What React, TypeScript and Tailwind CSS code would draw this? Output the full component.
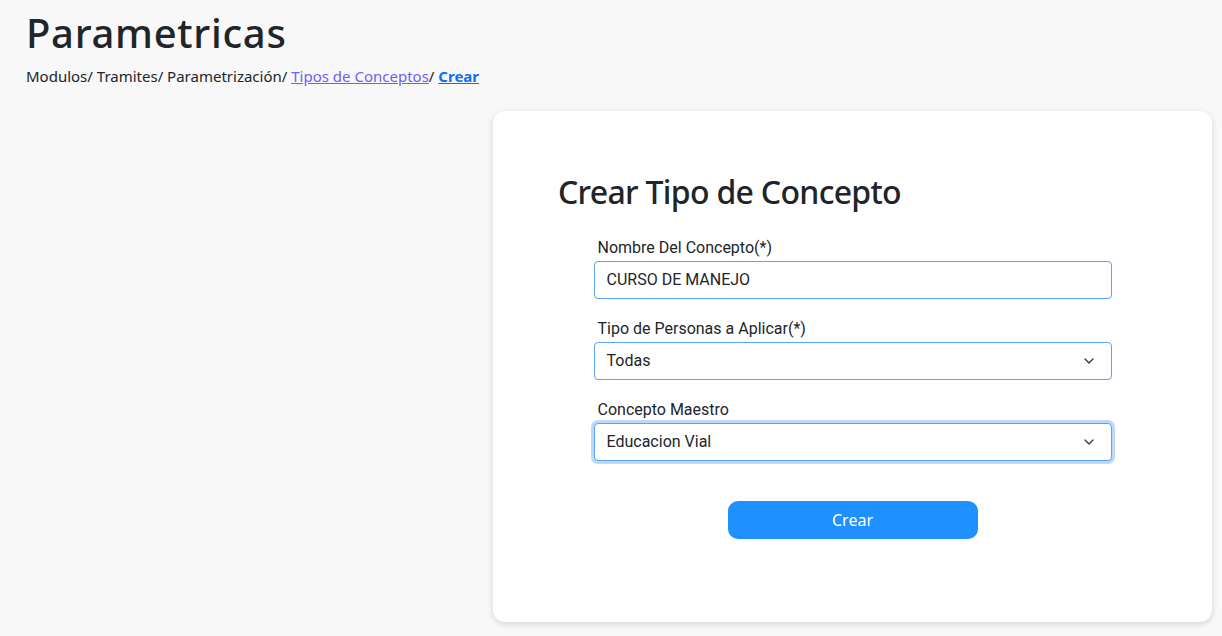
import { ChevronDown } from 'lucide-react';

type Field = {
  label: string;
  value: string;
  kind: 'input' | 'select';
  focused?: boolean;
};

const fields: Field[] = [
  { label: 'Nombre Del Concepto(*)', value: 'CURSO DE MANEJO', kind: 'input' },
  { label: 'Tipo de Personas a Aplicar(*)', value: 'Todas', kind: 'select' },
  { label: 'Concepto Maestro', value: 'Educacion Vial', kind: 'select', focused: true },
];

const ui = { fontFamily: '"Noto Sans", "Open Sans", sans-serif' };
const roboto = { fontFamily: 'Roboto, "Liberation Sans", sans-serif' };

export default function App() {
  return (
    <div className="min-h-[636px] bg-[#f8f8f8] text-[#212529]" style={ui}>
      <div className="px-[26px] pt-[9px]">
        <h1 className="text-[40px] leading-[1.2] font-medium tracking-[0.7px]">Parametricas</h1>
        <div className="mt-[9px] text-[15px] leading-[20px]">
          Modulos/ Tramites/ Parametrización/{' '}
          <a href="#" className="text-[#6f5ff5] underline">Tipos de Conceptos</a>/{' '}
          <a href="#" className="font-bold text-[#0d6efd] underline">Crear</a>
        </div>
      </div>

      <div className="mt-[25px] flex justify-end pr-[10px]">
        <div className="w-[719px] rounded-xl bg-white pt-[62px] pb-[83px] shadow-[0_2px_6px_rgba(0,0,0,0.15)]">
          <h2 className="pl-[65px] text-[32px] leading-[38px] font-medium tracking-[-0.7px]">Crear Tipo de Concepto</h2>

          <form className="mx-auto mt-[25px] flex w-[518px] flex-col gap-[18px]" style={roboto}>
            {fields.map((f) => (
              <div key={f.label} className="flex flex-col gap-[1px]">
                <label className="pl-[4px] text-[16px] leading-[24px] text-[#212529]">{f.label}</label>
                <div
                  className={`flex h-[38px] items-center justify-between rounded-[4px] border border-[#5aa2f5] bg-white pr-[14px] pl-[12px] text-[16px] text-[#212529] ${
                    f.focused ? 'ring-[3px] ring-[#bcd8fa]' : ''
                  }`}
                >
                  <span>{f.value}</span>
                  {f.kind === 'select' && <ChevronDown size={16} strokeWidth={2} className="text-[#343a40]" />}
                </div>
              </div>
            ))}

            <button
              type="button"
              className="mx-auto mt-[22px] h-[38px] w-[250px] rounded-[10px] bg-[#1e90ff] text-[16px] text-white"
              style={ui}
            >
              Crear
            </button>
          </form>
        </div>
      </div>
    </div>
  );
}
